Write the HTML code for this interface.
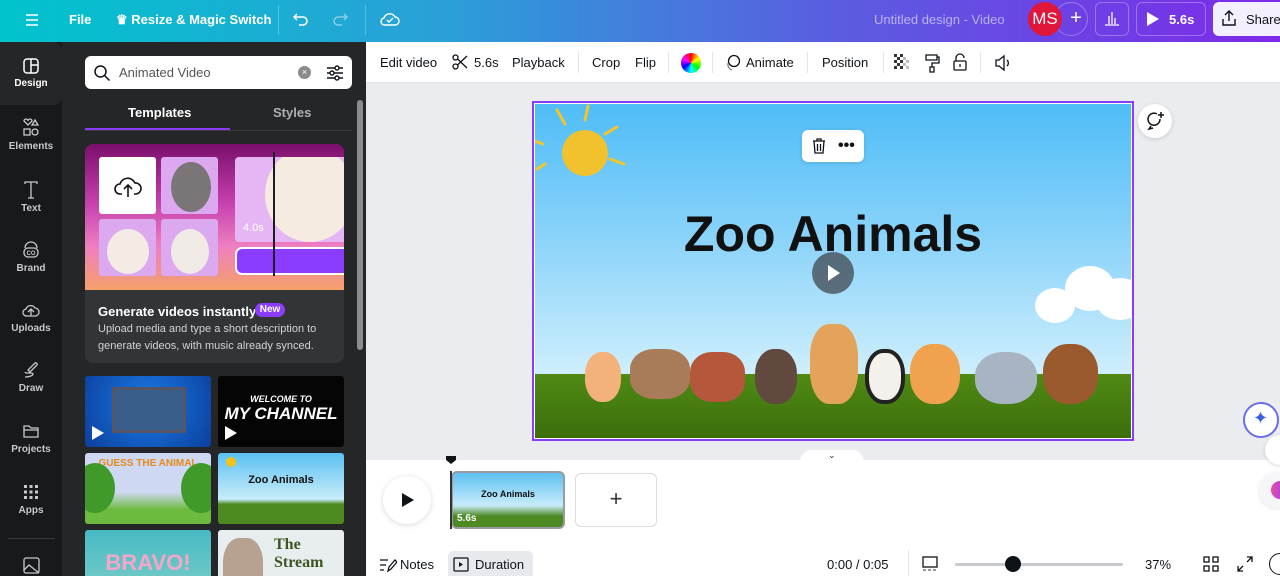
<!DOCTYPE html>
<html style="width:1280px;height:576px;overflow:hidden"><head><meta charset="utf-8"><style>
*{margin:0;padding:0;box-sizing:border-box}
body{width:1280px;height:576px;overflow:hidden;font-family:"Liberation Sans",sans-serif;position:relative;background:#fff}
.abs{position:absolute}
.top{left:0;top:0;width:1280px;height:42px;background:linear-gradient(90deg,#00c4cc 0%,#2b9fd8 35%,#5a5de0 65%,#7d2ae8 100%)}
.top span{position:absolute;color:#fff;font-size:13px;font-weight:bold;top:12px}
.rail{left:0;top:42px;width:62px;height:534px;background:#18191b;overflow:hidden}
.ri{position:absolute;left:0;width:62px;text-align:center;color:#c8c9cc;font-size:10px;font-weight:bold}
.ri svg{display:block;margin:0 auto 3px}
.panel{left:62px;top:42px;width:304px;height:534px;background:#252627;overflow:hidden}
.thumb{position:absolute;width:126px;height:71px;border-radius:3px;overflow:hidden}
.tb{left:366px;top:42px;width:914px;height:41px;background:#fff;border-bottom:1px solid #e3e4e8}
.tb span{position:absolute;top:13px;font-size:13px;color:#0e1318}
.sep{position:absolute;top:10px;width:1px;height:21px;background:#e3e4e8}
.stage{left:366px;top:83px;width:914px;height:377px;background:#ebecf0}
</style></head><body>
<div class="abs top">
 <svg class="abs" style="left:24px;top:12px" width="16" height="16"><path d="M2 3h12M2 8h12M2 13h12" stroke="#fff" stroke-width="1.6"/></svg>
 <span style="left:69px">File</span>
 <span style="left:116px">♛ Resize &amp; Magic Switch</span>
 <div class="abs" style="left:278px;top:5px;width:1px;height:30px;background:rgba(255,255,255,.25)"></div>
 <svg class="abs" style="left:292px;top:10px" width="18" height="18"><path d="M5 4L2 7l3 3M2 7h9a4 4 0 010 8H7" stroke="#fff" stroke-width="1.5" fill="none"/></svg>
 <svg class="abs" style="left:331px;top:10px" width="18" height="18"><path d="M13 4l3 3-3 3M16 7H7a4 4 0 000 8h4" stroke="rgba(255,255,255,.45)" stroke-width="1.5" fill="none"/></svg>
 <div class="abs" style="left:365px;top:5px;width:1px;height:30px;background:rgba(255,255,255,.25)"></div>
 <svg class="abs" style="left:379px;top:9px" width="22" height="20"><path d="M6 16h10a4 4 0 000-8 6 6 0 00-11 1 3.5 3.5 0 001 7z M8 11l2 2 4-4" stroke="#fff" stroke-width="1.4" fill="none"/></svg>
 <span style="left:874px;font-weight:normal;color:rgba(255,255,255,.55)">Untitled design - Video</span>
 <div class="abs" style="left:1054px;top:2px;width:34px;height:34px;border-radius:50%;border:1px solid rgba(255,255,255,.3);color:#fff;font-size:20px;text-align:center;line-height:31px;padding-left:10px">+</div>
 <div class="abs" style="left:1028px;top:2px;width:34px;height:34px;border-radius:50%;background:#e0163a;color:#fff;font-size:17px;text-align:center;line-height:34px">MS</div>
 <div class="abs" style="left:1095px;top:2px;width:34px;height:34px;border-radius:6px;border:1px solid rgba(255,255,255,.3)"></div>
 <svg class="abs" style="left:1103px;top:9px" width="18" height="18"><path d="M2 16h14M6 15V7M9 15V3M12 15V9" stroke="#fff" stroke-width="1.3"/></svg>
 <div class="abs" style="left:1136px;top:2px;width:70px;height:34px;border-radius:6px;border:1px solid rgba(255,255,255,.3)"></div>
 <svg class="abs" style="left:1146px;top:11px" width="14" height="16"><path d="M1 1l12 7-12 7z" fill="#fff"/></svg>
 <span style="left:1169px">5.6s</span>
 <div class="abs" style="left:1213px;top:2px;width:80px;height:34px;border-radius:6px;background:#f3efff"></div>
 <svg class="abs" style="left:1220px;top:9px" width="18" height="18"><path d="M9 12V2M5 6l4-4 4 4M3 10v6h12v-6" stroke="#0e1318" stroke-width="1.4" fill="none"/></svg>
 <span style="left:1246px;color:#0e1318;font-weight:normal">Share</span>
</div>
<div class="abs" style="left:0;top:42px;width:1280px;height:1px;background:#7d8ce0"></div>

<div class="abs rail">
 <div class="ri" style="top:0;height:63px;background:#252627;padding-top:15px;color:#fff;border-radius:0 8px 8px 0"><svg width="18" height="18"><rect x="2" y="2" width="14" height="14" rx="3" stroke="#fff" stroke-width="1.5" fill="none"/><path d="M9 2v14M9 8h7" stroke="#fff" stroke-width="1.5"/></svg>Design</div>
 <div class="ri" style="top:76px"><svg width="20" height="20"><path d="M3 3a2 2 0 014 0 2 2 0 014 0l-4 4zM14 2l3 5h-6z" stroke="#c8c9cc" fill="none" stroke-width="1.3"/><rect x="3" y="11" width="6" height="6" stroke="#c8c9cc" fill="none" stroke-width="1.3"/><circle cx="14" cy="14" r="3" stroke="#c8c9cc" fill="none" stroke-width="1.3"/></svg>Elements</div>
 <div class="ri" style="top:138px"><svg width="18" height="20"><path d="M3 4V2h12v2M9 2v16M6 18h6" stroke="#c8c9cc" fill="none" stroke-width="1.3"/></svg>Text</div>
 <div class="ri" style="top:198px"><svg width="20" height="20"><path d="M4 8a6 6 0 0112 0" stroke="#c8c9cc" fill="none" stroke-width="1.3"/><rect x="3" y="8" width="14" height="9" rx="4" stroke="#c8c9cc" fill="none" stroke-width="1.3"/><text x="10" y="15" font-size="6" fill="#c8c9cc" text-anchor="middle" font-family="Liberation Sans">CO</text></svg>Brand</div>
 <div class="ri" style="top:258px"><svg width="20" height="20"><path d="M6 16h8a4 4 0 000-8 5 5 0 00-9 1 3.5 3.5 0 001 7zM10 16V9M7 12l3-3 3 3" stroke="#c8c9cc" fill="none" stroke-width="1.3"/></svg>Uploads</div>
 <div class="ri" style="top:318px"><svg width="20" height="20"><path d="M9 12l7-7a1.5 1.5 0 00-2-2l-7 7zM4 17c3 0 8-1 8-3s-8 0-8-2" stroke="#c8c9cc" fill="none" stroke-width="1.3"/></svg>Draw</div>
 <div class="ri" style="top:379px"><svg width="20" height="20"><path d="M3 5h5l2 2h7v9H3z M3 9h14" stroke="#c8c9cc" fill="none" stroke-width="1.3"/></svg>Projects</div>
 <div class="ri" style="top:440px"><svg width="20" height="20"><g fill="#c8c9cc"><rect x="3" y="3" width="3" height="3"/><rect x="8.5" y="3" width="3" height="3"/><rect x="14" y="3" width="3" height="3"/><rect x="3" y="8.5" width="3" height="3"/><rect x="8.5" y="8.5" width="3" height="3"/><rect x="14" y="8.5" width="3" height="3"/><rect x="3" y="14" width="3" height="3"/><rect x="8.5" y="14" width="3" height="3"/><rect x="14" y="14" width="3" height="3"/></g></svg>Apps</div>
 <div class="abs" style="left:8px;top:496px;width:47px;height:1px;background:#3a3b3e"></div>
 <svg class="abs" style="left:22px;top:514px" width="20" height="20"><rect x="2" y="2" width="15" height="15" rx="2" stroke="#c8c9cc" fill="none" stroke-width="1.3"/><path d="M2 14l5-5 10 8" stroke="#c8c9cc" fill="none" stroke-width="1.3"/></svg>
</div>
<div class="abs" style="left:64px;top:50px;width:6px;height:322px;background:#6b6c6f;border-radius:3px"></div>

<div class="abs panel">
 <div class="abs" style="left:23px;top:14px;width:267px;height:33px;background:#fff;border-radius:6px"></div>
 <svg class="abs" style="left:31px;top:22px" width="18" height="18"><circle cx="7.5" cy="7.5" r="5.5" stroke="#0e1318" stroke-width="1.5" fill="none"/><path d="M11.5 11.5l5 5" stroke="#0e1318" stroke-width="1.5"/></svg>
 <div class="abs" style="left:57px;top:23px;font-size:13px;color:#555">Animated Video</div>
 <div class="abs" style="left:236px;top:24px;width:13px;height:13px;border-radius:50%;background:#8a8b8e;color:#fff;font-size:9px;text-align:center;line-height:13px">×</div>
 <svg class="abs" style="left:264px;top:22px" width="18" height="18"><path d="M1 4h16M1 9h16M1 14h16" stroke="#0e1318" stroke-width="1.4"/><circle cx="11" cy="4" r="2" fill="#fff" stroke="#0e1318" stroke-width="1.4"/><circle cx="6" cy="9" r="2" fill="#fff" stroke="#0e1318" stroke-width="1.4"/><circle cx="11" cy="14" r="2" fill="#fff" stroke="#0e1318" stroke-width="1.4"/></svg>
 <div class="abs" style="left:66px;top:63px;font-size:13px;font-weight:bold;color:#fff">Templates</div>
 <div class="abs" style="left:211px;top:63px;font-size:13px;font-weight:bold;color:#aeafb2">Styles</div>
 <div class="abs" style="left:23px;top:86px;width:145px;height:2px;background:#8b3dff"></div>
 <div class="abs" style="left:23px;top:88px;width:267px;height:1px;background:#3a3b3e"></div>

 <div class="abs" style="left:23px;top:102px;width:259px;height:219px;background:#333436;border-radius:8px;overflow:hidden">
  <div class="abs" style="left:0;top:0;width:259px;height:146px;background:linear-gradient(180deg,#7a0f6c 0%,#c53fae 40%,#ee7fc0 70%,#f4a06a 100%)"></div>
  <div class="abs" style="left:14px;top:13px;width:57px;height:57px;background:#fff;border-radius:3px"></div>
  <svg class="abs" style="left:28px;top:28px" width="30" height="28"><path d="M9 22H7a5 5 0 010-10 8 8 0 0115-1 5 5 0 011 11h-2M15 25V13M11 17l4-4 4 4" stroke="#111" stroke-width="1.6" fill="none"/></svg>
  <div class="abs" style="left:76px;top:13px;width:57px;height:57px;background:#dca8f0;border-radius:3px"><div style="position:absolute;left:10px;top:5px;width:40px;height:50px;border-radius:50%;background:#7a7576"></div></div>
  <div class="abs" style="left:14px;top:75px;width:57px;height:57px;background:#dca8f0;border-radius:3px"><div style="position:absolute;left:8px;top:10px;width:42px;height:45px;border-radius:50%;background:#f4ece4"></div></div>
  <div class="abs" style="left:76px;top:75px;width:57px;height:57px;background:#dca8f0;border-radius:3px"><div style="position:absolute;left:10px;top:10px;width:38px;height:45px;border-radius:50%;background:#f0ebe6"></div></div>
  <div class="abs" style="left:150px;top:13px;width:115px;height:85px;background:#e6b6f4;border-radius:4px;overflow:hidden"><div style="position:absolute;left:30px;top:-10px;width:90px;height:95px;border-radius:50%;background:#f6ebe0"></div><span style="position:absolute;left:8px;top:65px;color:#fff;font-size:11px">4.0s</span></div>
  <div class="abs" style="left:150px;top:103px;width:115px;height:28px;background:#8b3dff;border:2px solid #fff;border-radius:7px"></div>
  <div class="abs" style="left:188px;top:8px;width:2px;height:124px;background:#1d1d1f"></div>
  <div class="abs" style="left:13px;top:160px;font-size:13px;font-weight:bold;color:#fff">Generate videos instantly</div>
  <div class="abs" style="left:170px;top:159px;width:30px;height:14px;background:#8b3dff;border-radius:7px;color:#fff;font-size:10px;font-weight:bold;text-align:center;line-height:14px">New</div>
  <div class="abs" style="left:13px;top:177px;font-size:11px;color:#d2d3d6;line-height:17px">Upload media and type a short description to<br>generate videos, with music already synced.</div>
 </div>

 <div class="thumb" style="left:23px;top:334px;background:radial-gradient(circle at 50% 40%,#1a7be8,#0b3f9c)"><div style="position:absolute;left:27px;top:11px;width:74px;height:46px;background:#3a5e8a;border:3px solid #556"></div><svg class="abs" style="left:6px;top:49px" width="14" height="16"><path d="M1 1l12 7-12 7z" fill="#fff"/></svg></div>
 <div class="thumb" style="left:156px;top:334px;background:#050505;color:#fff;font-weight:bold;font-style:italic;text-align:center"><div style="font-size:9px;margin-top:18px">WELCOME TO</div><div style="font-size:17px">MY CHANNEL</div><svg class="abs" style="left:6px;top:49px" width="14" height="16"><path d="M1 1l12 7-12 7z" fill="#fff"/></svg></div>
 <div class="thumb" style="left:23px;top:411px;background:linear-gradient(180deg,#cfd8f2 55%,#6cba3e 80%)"><div style="position:absolute;left:0;top:5px;width:126px;text-align:center;color:#e58a1c;font-size:10px;font-weight:bold">GUESS THE ANIMAL</div><div style="position:absolute;left:-10px;top:10px;width:40px;height:50px;background:#3f9a2a;border-radius:50%"></div><div style="position:absolute;right:-10px;top:10px;width:40px;height:50px;background:#3f9a2a;border-radius:50%"></div></div>
 <div class="thumb" style="left:156px;top:411px;background:linear-gradient(180deg,#5bc0f2,#c9ecfa 65%,#4d8a22 72%)"><div style="position:absolute;left:8px;top:4px;width:10px;height:10px;border-radius:50%;background:#f3c21a"></div><div style="position:absolute;left:0;top:21px;width:126px;text-align:center;font-size:11px;font-weight:bold;color:#111">Zoo Animals</div></div>
 <div class="thumb" style="left:23px;top:488px;background:linear-gradient(180deg,#47b9c4,#7fd0c8)"><div style="position:absolute;left:0;top:20px;width:126px;text-align:center;font-size:22px;font-weight:bold;color:#f5a7c9">BRAVO!</div></div>
 <div class="thumb" style="left:156px;top:488px;background:#e8eef0"><div style="position:absolute;left:56px;top:6px;font-size:16px;font-family:'Liberation Serif',serif;color:#3d5522;font-weight:bold">The Stream</div><div style="position:absolute;left:5px;top:8px;width:40px;height:60px;background:#b7a292;border-radius:40%"></div></div>
</div>
<div class="abs" style="left:357px;top:100px;width:6px;height:250px;background:#8c8d90;border-radius:3px"></div>
<div class="abs" style="left:366px;top:282px;width:11px;height:60px;background:#252627;border-radius:0 10px 10px 0;color:#ccc;font-size:10px;line-height:60px;text-align:center">‹</div>

<div class="abs tb">
 <span style="left:14px">Edit video</span>
 <svg class="abs" style="left:86px;top:12px" width="16" height="16"><circle cx="3.5" cy="3.5" r="2.5" stroke="#0e1318" fill="none" stroke-width="1.3"/><circle cx="3.5" cy="12.5" r="2.5" stroke="#0e1318" fill="none" stroke-width="1.3"/><path d="M5.5 5L15 14M5.5 11L15 2" stroke="#0e1318" stroke-width="1.3"/></svg>
 <span style="left:108px">5.6s</span>
 <span style="left:146px">Playback</span>
 <div class="sep" style="left:212px"></div>
 <span style="left:226px">Crop</span>
 <span style="left:269px">Flip</span>
 <div class="sep" style="left:302px"></div>
 <div class="abs" style="left:315px;top:11px;width:20px;height:20px;border-radius:50%;background:conic-gradient(#f00,#ff0,#0f0,#0ff,#00f,#f0f,#f00)"></div>
 <div class="sep" style="left:346px"></div>
 <svg class="abs" style="left:358px;top:12px" width="18" height="18"><circle cx="10" cy="7" r="5.5" stroke="#0e1318" fill="none" stroke-width="1.3"/><path d="M4 9a6 6 0 004 7" stroke="#888" fill="none" stroke-width="1.3"/></svg>
 <span style="left:380px">Animate</span>
 <div class="sep" style="left:441px"></div>
 <span style="left:456px">Position</span>
 <div class="sep" style="left:517px"></div>
 <svg class="abs" style="left:528px;top:12px" width="18" height="18"><g fill="#333"><rect x="0" y="0" width="3" height="3"/><rect x="6" y="0" width="3" height="3"/><rect x="3" y="3" width="3" height="3"/><rect x="0" y="6" width="3" height="3"/><rect x="6" y="6" width="3" height="3"/><rect x="3" y="9" width="3" height="3"/><rect x="0" y="12" width="3" height="3"/><rect x="6" y="12" width="3" height="3"/></g><g fill="#bbb"><rect x="9" y="3" width="3" height="3"/><rect x="12" y="6" width="3" height="3"/><rect x="9" y="9" width="3" height="3"/><rect x="12" y="12" width="3" height="3"/></g></svg>
 <svg class="abs" style="left:558px;top:11px" width="16" height="20"><path d="M2 2h11v5H2zM13 4h2v6H8v4M6 14h4v5H6z" stroke="#0e1318" fill="none" stroke-width="1.3"/></svg>
 <svg class="abs" style="left:586px;top:10px" width="16" height="20"><path d="M4 9V6a4 4 0 018 0" stroke="#0e1318" fill="none" stroke-width="1.3"/><rect x="2" y="9" width="12" height="9" rx="1" stroke="#0e1318" fill="none" stroke-width="1.3"/><path d="M8 12v3" stroke="#0e1318" stroke-width="1.3"/></svg>
 <div class="sep" style="left:614px"></div>
 <svg class="abs" style="left:628px;top:12px" width="18" height="18"><path d="M2 6h3l5-4v14l-5-4H2zM13 6a4 4 0 010 6" stroke="#0e1318" fill="none" stroke-width="1.3"/></svg>
</div>

<div class="abs stage"></div>
<div class="abs" style="left:532px;top:101px;width:602px;height:340px;border:2px solid #8b3dff;background:#fff"></div>
<div class="abs" style="left:535px;top:104px;width:596px;height:334px;overflow:hidden;background:linear-gradient(180deg,#4fbdf7 0%,#8ad3fa 40%,#cdeefc 80%)">
 <svg class="abs" style="left:0;top:0" width="110" height="85"><g stroke="#f4c52a" stroke-width="3" stroke-linecap="round"><path d="M30 20l-8-14M50 16l3-14M70 30l12-7M75 55l14 5M8 40l-8-3M10 60l-8 5"/></g><circle cx="50" cy="49" r="23" fill="#f2c12e"/></svg>
 <div class="abs" style="left:0;top:101px;width:596px;text-align:center;font-size:50px;font-weight:bold;color:#111;font-family:'Liberation Sans',sans-serif">Zoo Animals</div>
 <div class="abs" style="left:500px;top:162px;width:120px;height:60px"><div style="position:absolute;left:30px;top:0;width:50px;height:45px;border-radius:50%;background:#fff"></div><div style="position:absolute;left:0;top:22px;width:40px;height:35px;border-radius:50%;background:#fff"></div><div style="position:absolute;left:60px;top:12px;width:50px;height:42px;border-radius:50%;background:#fff"></div></div>
 <div class="abs" style="left:0;top:270px;width:596px;height:64px;background:linear-gradient(180deg,#4f8a14,#3c6e0c)"></div>
 <div class="abs" style="left:50px;top:248px;width:36px;height:50px;border-radius:45%;background:#f2b27a"></div>
 <div class="abs" style="left:95px;top:245px;width:60px;height:50px;border-radius:40%;background:#a87c58"></div>
 <div class="abs" style="left:155px;top:248px;width:55px;height:50px;border-radius:40%;background:#b4573a"></div>
 <div class="abs" style="left:220px;top:245px;width:42px;height:55px;border-radius:45%;background:#61493f"></div>
 <div class="abs" style="left:275px;top:220px;width:48px;height:80px;border-radius:40%;background:#e3a35a"></div>
 <div class="abs" style="left:330px;top:245px;width:40px;height:55px;border-radius:45%;background:#f4f0ec;border:4px solid #222"></div>
 <div class="abs" style="left:375px;top:240px;width:50px;height:60px;border-radius:45%;background:#f0a24e"></div>
 <div class="abs" style="left:440px;top:248px;width:62px;height:52px;border-radius:45%;background:#a8b4c2"></div>
 <div class="abs" style="left:508px;top:240px;width:55px;height:60px;border-radius:45%;background:#9b5a2e"></div>
 <div class="abs" style="left:277px;top:148px;width:42px;height:42px;border-radius:50%;background:rgba(70,80,90,.8)"></div>
 <svg class="abs" style="left:292px;top:160px" width="14" height="18"><path d="M1 1l12 8-12 8z" fill="#fff"/></svg>
</div>
<div class="abs" style="left:802px;top:130px;width:62px;height:32px;background:#fff;border-radius:6px;box-shadow:0 1px 4px rgba(0,0,0,.15)"></div>
<svg class="abs" style="left:810px;top:137px" width="18" height="18"><path d="M3 4h12M7 4V2h4v2M4 4l1 12h8l1-12M7.5 7v7M10.5 7v7" stroke="#0e1318" fill="none" stroke-width="1.3"/></svg>
<div class="abs" style="left:838px;top:137px;font-size:16px;font-weight:bold;color:#0e1318">•••</div>
<div class="abs" style="left:1138px;top:104px;width:34px;height:34px;border-radius:50%;background:#fff;box-shadow:0 1px 4px rgba(0,0,0,.15)"></div>
<svg class="abs" style="left:1145px;top:111px" width="20" height="20"><path d="M15 8a6 6 0 11-3-5M6 15l-2 3 4-1" stroke="#0e1318" fill="none" stroke-width="1.5"/><path d="M16 1v6M13 4h6" stroke="#0e1318" stroke-width="1.5"/></svg>
<div class="abs" style="left:1243px;top:402px;width:36px;height:36px;border-radius:50%;background:#fff;border:2px solid #6a6ee8"></div>
<div class="abs" style="left:1253px;top:408px;color:#3d5ee0;font-size:18px">✦</div>
<div class="abs" style="left:1265px;top:435px;width:30px;height:30px;border-radius:50%;background:#fff;box-shadow:0 1px 4px rgba(0,0,0,.15)"></div>
<div class="abs" style="left:1259px;top:472px;width:36px;height:36px;border-radius:50%;background:#f6f6f8;box-shadow:0 1px 4px rgba(0,0,0,.1)"></div>
<div class="abs" style="left:1271px;top:481px;width:18px;height:18px;border-radius:50%;background:linear-gradient(90deg,#e94fa0,#8b3dff)"></div>

<div class="abs" style="left:800px;top:450px;width:64px;height:12px;background:#fff;border-radius:12px 12px 0 0"></div>
<div class="abs" style="left:828px;top:450px;font-size:9px;color:#333">⌄</div>
<svg class="abs" style="left:445px;top:455px" width="12" height="10"><path d="M1 1h10v4l-5 4-5-4z" fill="#0e1318"/></svg>
<div class="abs" style="left:383px;top:476px;width:48px;height:48px;border-radius:50%;background:#fff;box-shadow:0 1px 6px rgba(0,0,0,.15)"></div>
<svg class="abs" style="left:401px;top:492px" width="14" height="16"><path d="M1 1l12 7-12 7z" fill="#0e1318"/></svg>
<div class="abs" style="left:451px;top:471px;width:114px;height:58px;border:2px solid #9a9ba0;border-radius:6px;overflow:hidden;background:linear-gradient(180deg,#5bc0f2,#c9ecfa 60%,#4d8a22 80%)"><div style="position:absolute;left:0;top:16px;width:110px;text-align:center;font-size:9px;font-weight:bold;color:#111">Zoo Animals</div><div style="position:absolute;left:4px;top:40px;color:#fff;font-size:10px;font-weight:bold">5.6s</div></div>
<div class="abs" style="left:450px;top:471px;width:2px;height:58px;background:#333"></div>
<div class="abs" style="left:575px;top:473px;width:82px;height:54px;border:1px solid #dcdde1;border-radius:6px;text-align:center;line-height:50px;font-size:22px;color:#333;font-weight:300">+</div>

<svg class="abs" style="left:379px;top:557px" width="18" height="16"><path d="M1 3h8M1 8h6M1 13h4M9 14l1-4 6-7 2 2-6 7z" stroke="#0e1318" fill="none" stroke-width="1.3"/></svg>
<div class="abs" style="left:400px;top:557px;font-size:13px;color:#0e1318">Notes</div>
<div class="abs" style="left:448px;top:551px;width:85px;height:25px;background:#e8e9ec;border-radius:5px 5px 0 0"></div>
<svg class="abs" style="left:453px;top:557px" width="16" height="15"><rect x="1" y="1" width="14" height="13" rx="1" stroke="#0e1318" fill="none" stroke-width="1.3"/><path d="M6 5l4 2.5L6 10z" fill="#0e1318"/></svg>
<div class="abs" style="left:475px;top:557px;font-size:13px;color:#0e1318">Duration</div>
<div class="abs" style="left:827px;top:557px;font-size:13px;color:#0e1318">0:00 / 0:05</div>
<div class="abs" style="left:908px;top:550px;width:1px;height:26px;background:#e3e4e8"></div>
<svg class="abs" style="left:921px;top:555px" width="18" height="20"><rect x="2" y="2" width="14" height="10" stroke="#0e1318" fill="none" stroke-width="1.3"/><path d="M2 15h3M7 15h3M12 15h3" stroke="#999" stroke-width="2"/></svg>
<div class="abs" style="left:955px;top:563px;width:168px;height:3px;background:#c8c9cc;border-radius:2px"></div>
<div class="abs" style="left:1005px;top:556px;width:16px;height:16px;border-radius:50%;background:#0e1318"></div>
<div class="abs" style="left:1145px;top:557px;font-size:13px;color:#0e1318">37%</div>
<svg class="abs" style="left:1203px;top:556px" width="16" height="16"><g stroke="#0e1318" fill="none" stroke-width="1.3"><rect x="1" y="1" width="5" height="5"/><rect x="10" y="1" width="5" height="5"/><rect x="1" y="10" width="5" height="5"/><rect x="10" y="10" width="5" height="5"/></g></svg>
<svg class="abs" style="left:1237px;top:556px" width="16" height="16"><path d="M10 1h5v5M15 1l-5 5M6 15H1v-5M1 15l5-5" stroke="#0e1318" fill="none" stroke-width="1.3"/></svg>
<div class="abs" style="left:1269px;top:553px;width:22px;height:22px;border-radius:50%;border:1.5px solid #0e1318"></div>
</body></html>
